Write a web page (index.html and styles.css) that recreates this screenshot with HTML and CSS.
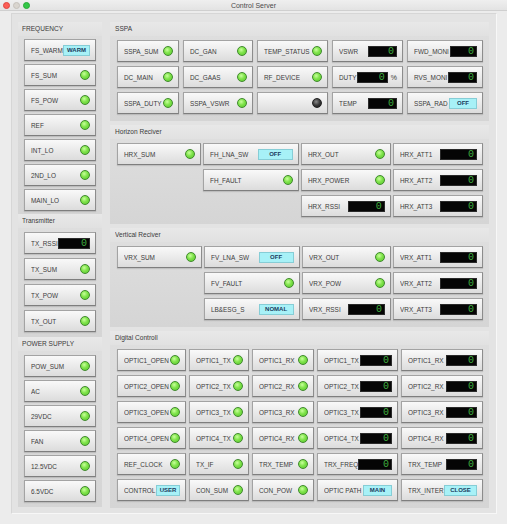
FILE: index.html
```html
<!DOCTYPE html>
<html>
<head>
<meta charset="utf-8">
<title>Control Server</title>
<link rel="stylesheet" href="styles.css">
</head>
<body>
<div class="window">
  <div class="titlebar">
    <div class="lights"><span class="tl red"></span><span class="tl yel"></span><span class="tl grn"></span></div>
    <div class="title">Control Server</div>
    <div></div>
  </div>
  <div class="panel">
    <div class="col-left">
      <section class="group">
        <div class="gtitle"><span>FREQUENCY</span></div>
        <div class="gbody stack g-freq">
          <div class="btn"><span class="lbl">FS_WARM</span><span class="tog t27">WARM</span></div>
          <div class="btn"><span class="lbl">FS_SUM</span><span class="led"></span></div>
          <div class="btn"><span class="lbl">FS_POW</span><span class="led"></span></div>
          <div class="btn"><span class="lbl">REF</span><span class="led"></span></div>
          <div class="btn"><span class="lbl">INT_LO</span><span class="led"></span></div>
          <div class="btn"><span class="lbl">2ND_LO</span><span class="led"></span></div>
          <div class="btn"><span class="lbl">MAIN_LO</span><span class="led"></span></div>
        </div>
      </section>
      <section class="group">
        <div class="gtitle"><span>Transmitter</span></div>
        <div class="gbody stack g-tx">
          <div class="btn"><span class="lbl">TX_RSSI</span><span class="disp d32">0</span></div>
          <div class="btn"><span class="lbl">TX_SUM</span><span class="led"></span></div>
          <div class="btn"><span class="lbl">TX_POW</span><span class="led"></span></div>
          <div class="btn"><span class="lbl">TX_OUT</span><span class="led"></span></div>
        </div>
      </section>
      <section class="group grow">
        <div class="gtitle"><span>POWER SUPPLY</span></div>
        <div class="gbody stack g-pow">
          <div class="btn"><span class="lbl">POW_SUM</span><span class="led"></span></div>
          <div class="btn"><span class="lbl">AC</span><span class="led"></span></div>
          <div class="btn"><span class="lbl">29VDC</span><span class="led"></span></div>
          <div class="btn"><span class="lbl">FAN</span><span class="led"></span></div>
          <div class="btn"><span class="lbl">12.5VDC</span><span class="led"></span></div>
          <div class="btn"><span class="lbl">6.5VDC</span><span class="led"></span></div>
        </div>
      </section>
    </div>

    <div class="col-right">
      <section class="group">
        <div class="gtitle"><span>SSPA</span></div>
        <div class="gbody grid g-sspa">
          <div class="btn"><span class="lbl">SSPA_SUM</span><span class="led"></span></div>
          <div class="btn"><span class="lbl">DC_GAN</span><span class="led"></span></div>
          <div class="btn"><span class="lbl">TEMP_STATUS</span><span class="led"></span></div>
          <div class="btn"><span class="lbl">VSWR</span><span class="disp d29">0</span></div>
          <div class="btn"><span class="lbl">FWD_MONI</span><span class="disp d27">0</span></div>

          <div class="btn"><span class="lbl">DC_MAIN</span><span class="led"></span></div>
          <div class="btn"><span class="lbl">DC_GAAS</span><span class="led"></span></div>
          <div class="btn"><span class="lbl">RF_DEVICE</span><span class="led"></span></div>
          <div class="btn"><span class="lbl">DUTY</span><span class="disp d31">0</span><span class="unit">%</span></div>
          <div class="btn"><span class="lbl">RVS_MONI</span><span class="disp d29">0</span></div>

          <div class="btn"><span class="lbl">SSPA_DUTY</span><span class="led"></span></div>
          <div class="btn"><span class="lbl">SSPA_VSWR</span><span class="led"></span></div>
          <div class="btn"><span class="lbl"></span><span class="led dark"></span></div>
          <div class="btn"><span class="lbl">TEMP</span><span class="disp d29">0</span></div>
          <div class="btn"><span class="lbl">SSPA_RAD</span><span class="tog t28">OFF</span></div>
        </div>
      </section>

      <section class="group">
        <div class="gtitle"><span>Horizon Reciver</span></div>
        <div class="gbody grid g-rx">
          <div class="btn"><span class="lbl">HRX_SUM</span><span class="led"></span></div>
          <div class="btn"><span class="lbl">FH_LNA_SW</span><span class="tog t35">OFF</span></div>
          <div class="btn"><span class="lbl">HRX_OUT</span><span class="led"></span></div>
          <div class="btn"><span class="lbl">HRX_ATT1</span><span class="disp d37">0</span></div>

          <div class="blank"></div>
          <div class="btn"><span class="lbl">FH_FAULT</span><span class="led"></span></div>
          <div class="btn"><span class="lbl">HRX_POWER</span><span class="led"></span></div>
          <div class="btn"><span class="lbl">HRX_ATT2</span><span class="disp d37">0</span></div>

          <div class="blank"></div>
          <div class="blank"></div>
          <div class="btn"><span class="lbl">HRX_RSSI</span><span class="disp d37">0</span></div>
          <div class="btn"><span class="lbl">HRX_ATT3</span><span class="disp d37">0</span></div>
        </div>
      </section>

      <section class="group">
        <div class="gtitle"><span>Vertical Reciver</span></div>
        <div class="gbody grid g-rx">
          <div class="btn"><span class="lbl">VRX_SUM</span><span class="led"></span></div>
          <div class="btn"><span class="lbl">FV_LNA_SW</span><span class="tog t35">OFF</span></div>
          <div class="btn"><span class="lbl">VRX_OUT</span><span class="led"></span></div>
          <div class="btn"><span class="lbl">VRX_ATT1</span><span class="disp d37">0</span></div>

          <div class="blank"></div>
          <div class="btn"><span class="lbl">FV_FAULT</span><span class="led"></span></div>
          <div class="btn"><span class="lbl">VRX_POW</span><span class="led"></span></div>
          <div class="btn"><span class="lbl">VRX_ATT2</span><span class="disp d37">0</span></div>

          <div class="blank"></div>
          <div class="btn"><span class="lbl">LB&amp;ESG_S</span><span class="tog t35">NOMAL</span></div>
          <div class="btn"><span class="lbl">VRX_RSSI</span><span class="disp d37">0</span></div>
          <div class="btn"><span class="lbl">VRX_ATT3</span><span class="disp d37">0</span></div>
        </div>
      </section>

      <section class="group grow">
        <div class="gtitle"><span>Digital Controll</span></div>
        <div class="gbody grid g-dig">
          <div class="btn"><span class="lbl">OPTIC1_OPEN</span><span class="led"></span></div>
          <div class="btn"><span class="lbl">OPTIC1_TX</span><span class="led"></span></div>
          <div class="btn"><span class="lbl">OPTIC1_RX</span><span class="led"></span></div>
          <div class="btn"><span class="lbl">OPTIC1_TX</span><span class="disp d32">0</span></div>
          <div class="btn"><span class="lbl">OPTIC1_RX</span><span class="disp d31">0</span></div>

          <div class="btn"><span class="lbl">OPTIC2_OPEN</span><span class="led"></span></div>
          <div class="btn"><span class="lbl">OPTIC2_TX</span><span class="led"></span></div>
          <div class="btn"><span class="lbl">OPTIC2_RX</span><span class="led"></span></div>
          <div class="btn"><span class="lbl">OPTIC2_TX</span><span class="disp d32">0</span></div>
          <div class="btn"><span class="lbl">OPTIC2_RX</span><span class="disp d31">0</span></div>

          <div class="btn"><span class="lbl">OPTIC3_OPEN</span><span class="led"></span></div>
          <div class="btn"><span class="lbl">OPTIC3_TX</span><span class="led"></span></div>
          <div class="btn"><span class="lbl">OPTIC3_RX</span><span class="led"></span></div>
          <div class="btn"><span class="lbl">OPTIC3_TX</span><span class="disp d32">0</span></div>
          <div class="btn"><span class="lbl">OPTIC3_RX</span><span class="disp d31">0</span></div>

          <div class="btn"><span class="lbl">OPTIC4_OPEN</span><span class="led"></span></div>
          <div class="btn"><span class="lbl">OPTIC4_TX</span><span class="led"></span></div>
          <div class="btn"><span class="lbl">OPTIC4_RX</span><span class="led"></span></div>
          <div class="btn"><span class="lbl">OPTIC4_TX</span><span class="disp d32">0</span></div>
          <div class="btn"><span class="lbl">OPTIC4_RX</span><span class="disp d31">0</span></div>

          <div class="btn"><span class="lbl">REF_CLOCK</span><span class="led"></span></div>
          <div class="btn"><span class="lbl">TX_IF</span><span class="led"></span></div>
          <div class="btn"><span class="lbl">TRX_TEMP</span><span class="led"></span></div>
          <div class="btn"><span class="lbl">TRX_FREQ</span><span class="disp d34">0</span></div>
          <div class="btn"><span class="lbl">TRX_TEMP</span><span class="disp d31">0</span></div>

          <div class="btn"><span class="lbl">CONTROL</span><span class="tog t24">USER</span></div>
          <div class="btn"><span class="lbl">CON_SUM</span><span class="led"></span></div>
          <div class="btn"><span class="lbl">CON_POW</span><span class="led"></span></div>
          <div class="btn"><span class="lbl">OPTIC PATH</span><span class="tog t29">MAIN</span></div>
          <div class="btn"><span class="lbl">TRX_INTER</span><span class="tog t33">CLOSE</span></div>
        </div>
      </section>
    </div>
  </div>
</div>
</body>
</html>
```

FILE: styles.css
```css
* { box-sizing: border-box; margin: 0; padding: 0; }
html, body { width: 507px; height: 524px; overflow: hidden; }
body {
  background: #ececec;
  font-family: "Liberation Sans", Arial, sans-serif;
  color: #3c3c3c;
}

/* title bar */
.titlebar {
  height: 11px;
  display: grid;
  grid-template-columns: 40px 1fr 40px;
  align-items: center;
  background: linear-gradient(#efefef, #e3e3e3);
  border-bottom: 1px solid #cfcfcf;
}
.lights { display: flex; gap: 3px; padding-left: 3px; }
.tl { width: 7px; height: 7px; border-radius: 50%; }
.tl.red { background: #fc5f57; border: 1px solid #e0443e; }
.tl.yel { background: #d9d5cf; border: 1px solid #c5c1bb; }
.tl.grn { background: #33c748; border: 1px solid #27aa35; }
.title {
  text-align: center;
  font-size: 7px;
  color: #4a4a4a;
}

/* outer panel */
.panel {
  margin: 2px 10px 0 11px;
  height: 501px;
  padding: 8px 9px 0 6px;
  display: flex;
  gap: 8px;
  background: #e3e3e3;
  border-top: 1px solid #d6d6d6;
  border-left: 1px solid #d6d6d6;
  border-right: 1px solid #f7f7f7;
  border-bottom: 1px solid #f7f7f7;
}
.col-left { width: 84px; display: flex; flex-direction: column; }
.col-right { width: 379px; display: flex; flex-direction: column; gap: 4px; }

.group { display: flex; flex-direction: column; }
.group.grow { flex: 1; padding-bottom: 6px; }
.grow .gbody { flex: 1; }
.gtitle {
  height: 14px;
  line-height: 14px;
  font-size: 8px;
  padding-left: 4px;
  color: #3a3a3a;
  white-space: nowrap;
  background: linear-gradient(#e8e8e8, #e1e1e1);
}
.gtitle span {
  display: inline-block;
  transform: scaleX(0.82);
  transform-origin: left center;
}
.col-right .gtitle { padding-left: 5px; }
.gbody {
  background: linear-gradient(#dedede, #d5d5d5);
}

/* left stacks */
.stack { display: flex; flex-direction: column; padding: 3px 6px 3px; gap: 3px; }
.g-tx { padding: 4px 6px 5px; gap: 4px; }
.g-pow { padding: 4px 6px 3px; gap: 3px; }

/* right grids */
.grid {
  display: grid;
  grid-auto-rows: 22px;
  row-gap: 4px;
  padding: 4px 6px 7px 7px;
}
.g-sspa { grid-template-columns: 62px 70px 71px 71px 76px; column-gap: 4px; }
.g-rx { grid-template-columns: repeat(4, 1fr); column-gap: 2px; }
.g-dig { grid-template-columns: 69px 60px 62px 81px 82px; column-gap: 3px; }

/* buttons */
.btn {
  height: 22px;
  display: flex;
  align-items: center;
  padding: 0 5px 0 6px;
  background: linear-gradient(#f9f9f9, #ececec 45%, #dcdcdc);
  border: 1px solid #a3a3a3;
  border-right-color: #8c8c8c;
  border-bottom-color: #7e7e7e;
  box-shadow: 0 1px 1px rgba(0, 0, 0, 0.12);
}
.lbl {
  flex: 1;
  min-width: 0;
  font-size: 8px;
  color: #3b3b3b;
  white-space: nowrap;
  transform: scaleX(0.8);
  transform-origin: left center;
}

/* LEDs */
.led {
  width: 10px;
  height: 10px;
  border-radius: 50%;
  flex: none;
  border: 1px solid #3f8a2c;
  background: radial-gradient(circle at 40% 35%, #c8ff9c 0, #7fe34a 45%, #58c630 100%);
}
.led.dark {
  border-color: #222;
  background: radial-gradient(circle at 40% 35%, #8a8a8a 0, #3a3a3a 50%, #151515 100%);
}

/* 7-seg displays */
.disp {
  height: 11px;
  flex: none;
  background: #050505;
  border: 1px solid #2a2a2a;
  color: #3fae3f;
  font-family: "Liberation Mono", monospace;
  font-size: 10px;
  line-height: 9px;
  text-align: right;
  padding-right: 2px;
}
.d27 { width: 27px; }
.d29 { width: 29px; }
.d31 { width: 31px; }
.d32 { width: 32px; }
.d34 { width: 34px; }
.d37 { width: 37px; }
.unit { font-size: 7px; margin-left: 3px; color: #3b3b3b; }

/* toggles */
.tog {
  height: 11px;
  flex: none;
  background: #a7f1f7;
  border: 1px solid #86cdd6;
  color: #1a3a5c;
  font-weight: bold;
  font-size: 6px;
  line-height: 9px;
  text-align: center;
}
.t24 { width: 24px; }
.t27 { width: 27px; }
.t28 { width: 28px; }
.t29 { width: 29px; }
.t33 { width: 33px; }
.t35 { width: 35px; }
```
